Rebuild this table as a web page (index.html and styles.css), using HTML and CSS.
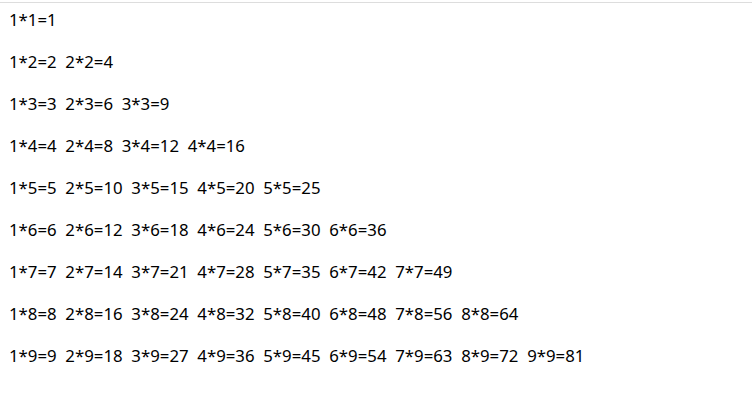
FILE: index.html
```html
<!DOCTYPE html>
<html>
<head>
<meta charset="utf-8">
<link rel="stylesheet" href="styles.css">
</head>
<body>
<div class="rule"></div>
<div class="table">
<div class="row">1*1=1</div>
<div class="row">1*2=2&nbsp;&nbsp;2*2=4</div>
<div class="row">1*3=3&nbsp;&nbsp;2*3=6&nbsp;&nbsp;3*3=9</div>
<div class="row">1*4=4&nbsp;&nbsp;2*4=8&nbsp;&nbsp;3*4=12&nbsp;&nbsp;4*4=16</div>
<div class="row">1*5=5&nbsp;&nbsp;2*5=10&nbsp;&nbsp;3*5=15&nbsp;&nbsp;4*5=20&nbsp;&nbsp;5*5=25</div>
<div class="row">1*6=6&nbsp;&nbsp;2*6=12&nbsp;&nbsp;3*6=18&nbsp;&nbsp;4*6=24&nbsp;&nbsp;5*6=30&nbsp;&nbsp;6*6=36</div>
<div class="row">1*7=7&nbsp;&nbsp;2*7=14&nbsp;&nbsp;3*7=21&nbsp;&nbsp;4*7=28&nbsp;&nbsp;5*7=35&nbsp;&nbsp;6*7=42&nbsp;&nbsp;7*7=49</div>
<div class="row">1*8=8&nbsp;&nbsp;2*8=16&nbsp;&nbsp;3*8=24&nbsp;&nbsp;4*8=32&nbsp;&nbsp;5*8=40&nbsp;&nbsp;6*8=48&nbsp;&nbsp;7*8=56&nbsp;&nbsp;8*8=64</div>
<div class="row">1*9=9&nbsp;&nbsp;2*9=18&nbsp;&nbsp;3*9=27&nbsp;&nbsp;4*9=36&nbsp;&nbsp;5*9=45&nbsp;&nbsp;6*9=54&nbsp;&nbsp;7*9=63&nbsp;&nbsp;8*9=72&nbsp;&nbsp;9*9=81</div>
</div>
</body>
</html>
```
FILE: styles.css
```css
html, body {
  margin: 0;
  padding: 0;
  background: #ffffff;
}
body {
  font-family: "Noto Sans", "Open Sans", sans-serif;
  font-size: 16.8px;
  color: #000000;
}
.rule {
  margin-top: 2px;
  width: 752px;
  height: 1px;
  background: #dddddd;
}
.table {
  display: flex;
  flex-direction: column;
  padding: 0 0 0 9px;
}
.row {
  height: 42px;
  line-height: 34px;
  white-space: nowrap;
}
```
